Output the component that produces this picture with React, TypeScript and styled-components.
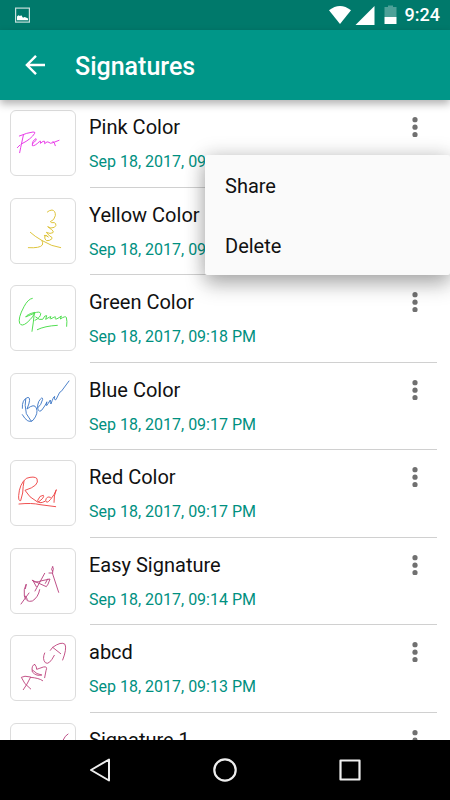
import React from "react";
import styled, { createGlobalStyle } from "styled-components";

const GlobalStyle = createGlobalStyle`
  * { box-sizing: border-box; }
  body { margin: 0; background: #fff; font-family: Roboto, "Noto Sans", sans-serif; }
  button { border: 0; padding: 0; background: none; color: inherit; font: inherit; cursor: pointer; }
  svg { display: block; flex: none; }
`;

const Screen = styled.div`
  display: flex;
  flex-direction: column;
  height: 100vh;
  overflow: hidden;
`;

const StatusBar = styled.div`
  flex: none;
  display: flex;
  align-items: center;
  justify-content: space-between;
  height: 30px;
  padding: 0 10px 0 15px;
  background: #00796b;
  color: #fff;
`;

const StatusIcons = styled.div`
  display: flex;
  align-items: center;
`;

const Clock = styled.time`
  margin-left: 5px;
  font-size: 18px;
  line-height: 30px;
  font-weight: 500;
`;

const AppBar = styled.header`
  position: relative;
  z-index: 1;
  flex: none;
  display: flex;
  align-items: center;
  height: 70px;
  padding: 0 15px;
  background: #009688;
  color: #fff;
  box-shadow: 0 4px 8px rgba(0, 0, 0, 0.3);
`;

const BackButton = styled.button`
  display: grid;
  place-items: center;
  width: 40px;
  height: 40px;
`;

const Title = styled.h1`
  margin: 0 0 0 20px;
  padding-top: 4px;
  font-size: 25px;
  line-height: 32px;
  font-weight: 500;
`;

const Content = styled.main`
  position: relative;
  flex: 1;
  min-height: 0;
  overflow: hidden;
`;

const List = styled.ul`
  display: grid;
  grid-auto-rows: 88px 87px;
  margin: 0;
  padding: 0;
  list-style: none;
`;

const Row = styled.li`
  display: flex;
  align-items: flex-start;
  padding: 0 13px 0 10px;
`;

const Thumb = styled.div`
  flex: none;
  width: 66px;
  height: 66px;
  margin-top: 10px;
  border: 1px solid #dcdcdc;
  border-radius: 6px;
  background: #fff;
`;

const Details = styled.div`
  flex: 1;
  display: flex;
  justify-content: space-between;
  align-items: flex-start;
  align-self: stretch;
  margin-left: 14px;
  border-bottom: 1px solid #d0d0d0;
`;

const Labels = styled.div`
  margin-left: -1px;
`;

const Name = styled.div`
  padding-top: 12px;
  font-size: 20px;
  line-height: 30px;
  color: #111;
`;

const Saved = styled.time`
  display: block;
  padding-top: 8px;
  font-size: 16px;
  line-height: 24px;
  color: #009080;
`;

const MoreButton = styled.button`
  display: grid;
  place-items: center;
  width: 44px;
  height: 54px;
`;

const Menu = styled.div`
  position: absolute;
  top: 55px;
  right: 0;
  z-index: 2;
  display: flex;
  flex-direction: column;
  width: 245px;
  border-radius: 2px;
  background: #fafafa;
  box-shadow: 0 10px 20px rgba(0, 0, 0, 0.26), 0 0 20px rgba(0, 0, 0, 0.18);
`;

const MenuItem = styled.button`
  && {
    height: 60px;
    padding: 2px 20px 0;
    text-align: left;
    font-size: 20px;
    line-height: 30px;
    color: #111;
  }
`;

const NavBar = styled.nav`
  position: relative;
  z-index: 3;
  flex: none;
  display: flex;
  align-items: center;
  justify-content: center;
  gap: 85px;
  height: 60px;
  background: #000;
`;

const NavButton = styled.button`
  display: grid;
  place-items: center;
  width: 40px;
  height: 60px;
`;

interface Signature {
  name: string;
  saved: string;
  color: string;
  viewBox: string;
  path: string;
}

const ODD = "33 33 192 192";
const EVEN = "33 27 192 192";

const signatures: Signature[] = [
  {
    name: "Pink Color",
    saved: "Sep 18, 2017, 09:18 PM",
    color: "#e62ee6",
    viewBox: ODD,
    path: "M52 143L60 135M70 106L62 143L59 158M58 108Q82 98 99 96Q107 96 104 100Q94 117 66 131M97 132Q112 119 108 116Q96 122 97 137Q104 139 119 124Q123 120 121 130Q131 121 134 124L134 131Q142 122 147 127Q149 132 159 128L177 121M159 124Q164 128 166 137",
  },
  {
    name: "Yellow Color",
    saved: "Sep 18, 2017, 09:18 PM",
    color: "#dcc02e",
    viewBox: EVEN,
    path: "M91 127Q104 139 125 151Q156 170 182 173M85 173Q120 175 127 165Q130 159 126 152M133 136Q139 134 145 141Q138 134 134 139Q133 149 140 152Q149 153 156 146Q158 141 149 138L139 127Q151 133 159 128Q162 123 155 119L143 110Q152 117 163 112Q170 107 167 101Q164 96 155 98L151 95Q163 91 166 77Q167 62 156 60Q147 61 142 66",
  },
  {
    name: "Green Color",
    saved: "Sep 18, 2017, 09:18 PM",
    color: "#45dc45",
    viewBox: ODD,
    path: "M97 70Q84 72 72 95Q53 130 59 145Q65 156 81 143Q102 124 104 112Q81 118 77 126Q92 119 103 115Q100 145 96 169M103 114Q119 108 122 115Q123 127 105 136M107 126Q119 137 128 133Q135 119 140 122L137 133Q151 124 153 125Q148 131 152 132Q169 122 166 127Q163 137 177 128L184 123L181 132Q196 122 199 127Q202 138 200 154M112 164Q134 153 172 151",
  },
  {
    name: "Blue Color",
    saved: "Sep 18, 2017, 09:17 PM",
    color: "#3f78c6",
    viewBox: EVEN,
    path: "M77 102Q73 119 79 146L94 169M67 130Q65 103 84 97Q95 98 81 132Q103 114 109 129Q116 145 99 166Q84 178 67 149M113 129Q124 120 128 103Q127 92 116 110Q108 132 119 139Q124 140 134 123Q144 107 140 111Q137 124 140 122L151 105Q150 116 153 117Q160 95 164 94Q162 107 168 104L179 82L184 79L207 48",
  },
  {
    name: "Red Color",
    saved: "Sep 18, 2017, 09:17 PM",
    color: "#ee4444",
    viewBox: ODD,
    path: "M72 93Q69 109 68 129L62 152Q55 154 56 137Q58 102 79 85Q103 77 111 86Q120 107 75 121Q86 142 114 157Q135 142 130 136Q119 135 113 151Q115 164 135 154M151 142Q140 137 137 151Q139 163 151 149Q164 134 169 119Q161 137 162 157M57 162Q96 158 120 164L167 170",
  },
  {
    name: "Easy Signature",
    saved: "Sep 18, 2017, 09:14 PM",
    color: "#b94480",
    viewBox: EVEN,
    path: "M63 192L87 159M78 133Q70 148 73 168Q78 188 97 183Q115 172 119 149M79 134L76 146M76 168L82 178M105 153L134 100M97 121L139 140Q144 136 150 117L126 122Q101 131 97 121M99 122L109 140M136 130L143 117M158 80Q151 89 158 94Q163 85 158 80M158 93V99M147 99L157 99L176 157",
  },
  {
    name: "abcd",
    saved: "Sep 18, 2017, 09:13 PM",
    color: "#bf4880",
    viewBox: ODD,
    path: "M70 194Q81 179 92 156Q72 151 64 157Q71 177 92 192M92 157Q117 159 128 167M104 118Q93 121 97 141Q110 155 125 150M104 118Q111 126 110 133Q119 130 130 126Q144 123 138 137L134 158M97 135Q111 149 124 150M134 84Q126 102 136 113Q147 122 163 91M151 76L158 67L182 86M158 67Q184 48 195 58Q201 72 188 105",
  },
  {
    name: "Signature 1",
    saved: "Sep 18, 2017, 09:12 PM",
    color: "#b94480",
    viewBox: "33 102 192 192",
    path: "M204 132Q195 137 189 151Q170 190 135 220",
  },
];

const SignatureRow = ({ item }: { item: Signature }) => (
  <Row>
    <Thumb>
      <svg width="64" height="64" viewBox={item.viewBox} fill="none" stroke={item.color} strokeWidth="2.8" strokeLinecap="round" strokeLinejoin="round" aria-hidden="true">
        <path d={item.path} />
      </svg>
    </Thumb>
    <Details>
      <Labels>
        <Name>{item.name}</Name>
        <Saved>{item.saved}</Saved>
      </Labels>
      <MoreButton aria-label={`Options for ${item.name}`}>
        <svg width="6" height="20" viewBox="0 0 6 20" fill="#707070">
          <circle cx="3" cy="2.7" r="2.6" />
          <circle cx="3" cy="10.2" r="2.6" />
          <circle cx="3" cy="17.7" r="2.6" />
        </svg>
      </MoreButton>
    </Details>
  </Row>
);

export default function App() {
  return (
    <Screen>
      <GlobalStyle />
      <StatusBar>
        <svg width="15" height="16" viewBox="0 0 15 16" aria-hidden="true">
          <rect x="0.6" y="1.1" width="13.8" height="14" fill="none" stroke="#c5e0dc" strokeWidth="1.2" />
          <path d="M2 13.3V9.5L3.3 8.3L5 9.1L6.3 8.2L8 10.8L9.5 10L11 10.6L13 11.5V13.3Z" fill="#fff" />
        </svg>
        <StatusIcons>
          <svg width="76" height="20" viewBox="0 0 76 20" aria-hidden="true">
            <path d="M5 5.3Q16 -3.3 27 5.3L16 19Z" fill="#fff" />
            <path d="M31.5 20L50.5 1V20Z" fill="#fff" />
            <path d="M60.5 2H64V0.5H69V2H72.5V12H60.5Z" fill="#4da198" />
            <path d="M60.5 12H72.5V19H60.5Z" fill="#fff" />
          </svg>
          <Clock>9:24</Clock>
        </StatusIcons>
      </StatusBar>
      <AppBar>
        <BackButton aria-label="Back">
          <svg width="20" height="20" viewBox="0 0 20 20" fill="none" stroke="#fff" strokeWidth="2.4">
            <path d="M20 10H2M11 0.9L1.9 10L11 19.1" />
          </svg>
        </BackButton>
        <Title>Signatures</Title>
      </AppBar>
      <Content>
        <List>
          {signatures.map((item) => (
            <SignatureRow key={item.name} item={item} />
          ))}
        </List>
        <Menu role="menu">
          <MenuItem role="menuitem">Share</MenuItem>
          <MenuItem role="menuitem">Delete</MenuItem>
        </Menu>
      </Content>
      <NavBar>
        <NavButton aria-label="Back">
          <svg width="22" height="24" viewBox="0 0 22 24" fill="none" stroke="#eee" strokeWidth="2" strokeLinejoin="round">
            <path d="M20 1.5V22.5L2 12Z" />
          </svg>
        </NavButton>
        <NavButton aria-label="Home">
          <svg width="24" height="24" viewBox="0 0 24 24" fill="none" stroke="#eee" strokeWidth="2.2">
            <circle cx="12" cy="12" r="10.7" />
          </svg>
        </NavButton>
        <NavButton aria-label="Overview">
          <svg width="22" height="22" viewBox="0 0 22 22" fill="none" stroke="#eee" strokeWidth="2.2" strokeLinejoin="round">
            <rect x="1.5" y="1.5" width="19" height="19" />
          </svg>
        </NavButton>
      </NavBar>
    </Screen>
  );
}
